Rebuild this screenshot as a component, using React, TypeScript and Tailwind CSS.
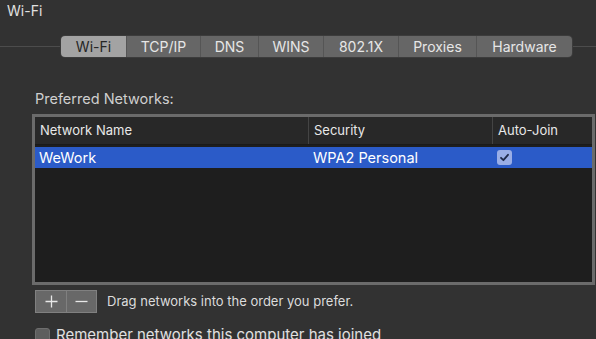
import React from "react";

const tabs = ["Wi-Fi", "TCP/IP", "DNS", "WINS", "802.1X", "Proxies", "Hardware"];
const tabWidths = [65, 74, 58, 65, 75, 78, 96];

export default function App() {
  return (
    <div
      className="w-[596px] h-[339px] overflow-hidden bg-[#323232] text-[#dcdcdc] relative"
      style={{ fontFamily: "Inter, 'Noto Sans', sans-serif" }}
    >
      <div className="pl-[7px] pt-[2px] text-[14px] leading-[18px] text-[#e0e0e0]">Wi-Fi</div>

      {/* tab bar */}
      <div className="relative mt-[16px] h-[21px]">
        <div className="absolute left-0 right-0 top-[10px] h-px bg-[#4c4c4c]" />
        <div className="absolute left-[61px] top-0 flex h-[21px] rounded-[4px] overflow-hidden shadow-[0_0_0_1px_#3c3c3c]">
          {tabs.map((t, i) => (
            <div
              key={t}
              style={{ width: tabWidths[i] }}
              className={
                "flex items-center justify-center text-[14px] " +
                (i === 0
                  ? "bg-[#a3a3a3] text-[#262626]"
                  : "bg-[#666666] text-[#e6e6e6] border-l border-[#555555]")
              }
            >
              {t}
            </div>
          ))}
        </div>
      </div>

      <div className="pl-[35px] mt-[33px] text-[14.5px] leading-[18px] text-[#cfcfcf]">Preferred Networks:</div>

      {/* table */}
      <div className="ml-[32px] mt-[6px] w-[563px] h-[171px] border-[3px] border-[#6b6b6b] bg-[#1e1e1e]">
        <div className="flex h-[28px] bg-[#282828] text-[13px] text-[#e8e8e8] border-b border-[#1a1a1a]">
          <div className="w-[273px] pl-[5px] flex items-center">Network Name</div>
          <div className="w-[184px] pl-[5px] flex items-center border-l border-[#444]">Security</div>
          <div className="flex-1 pl-[5px] flex items-center border-l border-[#444]">Auto-Join</div>
        </div>
        <div className="flex h-[21px] mt-[2px] bg-[#2b5bc8] text-[14.5px] text-white">
          <div className="w-[273px] pl-[4px] flex items-center">WeWork</div>
          <div className="w-[184px] pl-[5px] flex items-center">WPA2 Personal</div>
          <div className="flex-1 pl-[5px] flex items-center">
            <div className="w-[15px] h-[15px] rounded-[3px] bg-[#9aaee6] flex items-center justify-center">
              <svg width="11" height="11" viewBox="0 0 11 11">
                <path d="M2 5.8 L4.4 8.2 L9 2.8" fill="none" stroke="#1f2a4a" strokeWidth="1.8" strokeLinecap="round" strokeLinejoin="round" />
              </svg>
            </div>
          </div>
        </div>
      </div>

      {/* +/- and hint */}
      <div className="flex items-center mt-[5px] pl-[35px]">
        <div className="flex h-[23px] border border-[#808080] bg-[#686868]">
          <div className="w-[31px] flex items-center justify-center border-r border-[#808080]">
            <svg width="13" height="13" viewBox="0 0 13 13">
              <path d="M6.5 0.5 V12.5 M0.5 6.5 H12.5" stroke="#e8e8e8" strokeWidth="1.3" />
            </svg>
          </div>
          <div className="w-[29px] flex items-center justify-center">
            <svg width="13" height="13" viewBox="0 0 13 13">
              <path d="M0.5 6.5 H12.5" stroke="#e8e8e8" strokeWidth="1.3" />
            </svg>
          </div>
        </div>
        <div className="ml-[10px] text-[13px] text-[#dcdcdc]">Drag networks into the order you prefer.</div>
      </div>

      <div className="flex items-center mt-[13px] pl-[35px]">
        <div className="w-[15px] h-[15px] rounded-[3px] bg-[#5e5e5e] border border-[#6e6e6e]" />
        <div className="ml-[6px] text-[15px] leading-[18px] text-[#e0e0e0]">Remember networks this computer has joined</div>
      </div>
    </div>
  );
}
